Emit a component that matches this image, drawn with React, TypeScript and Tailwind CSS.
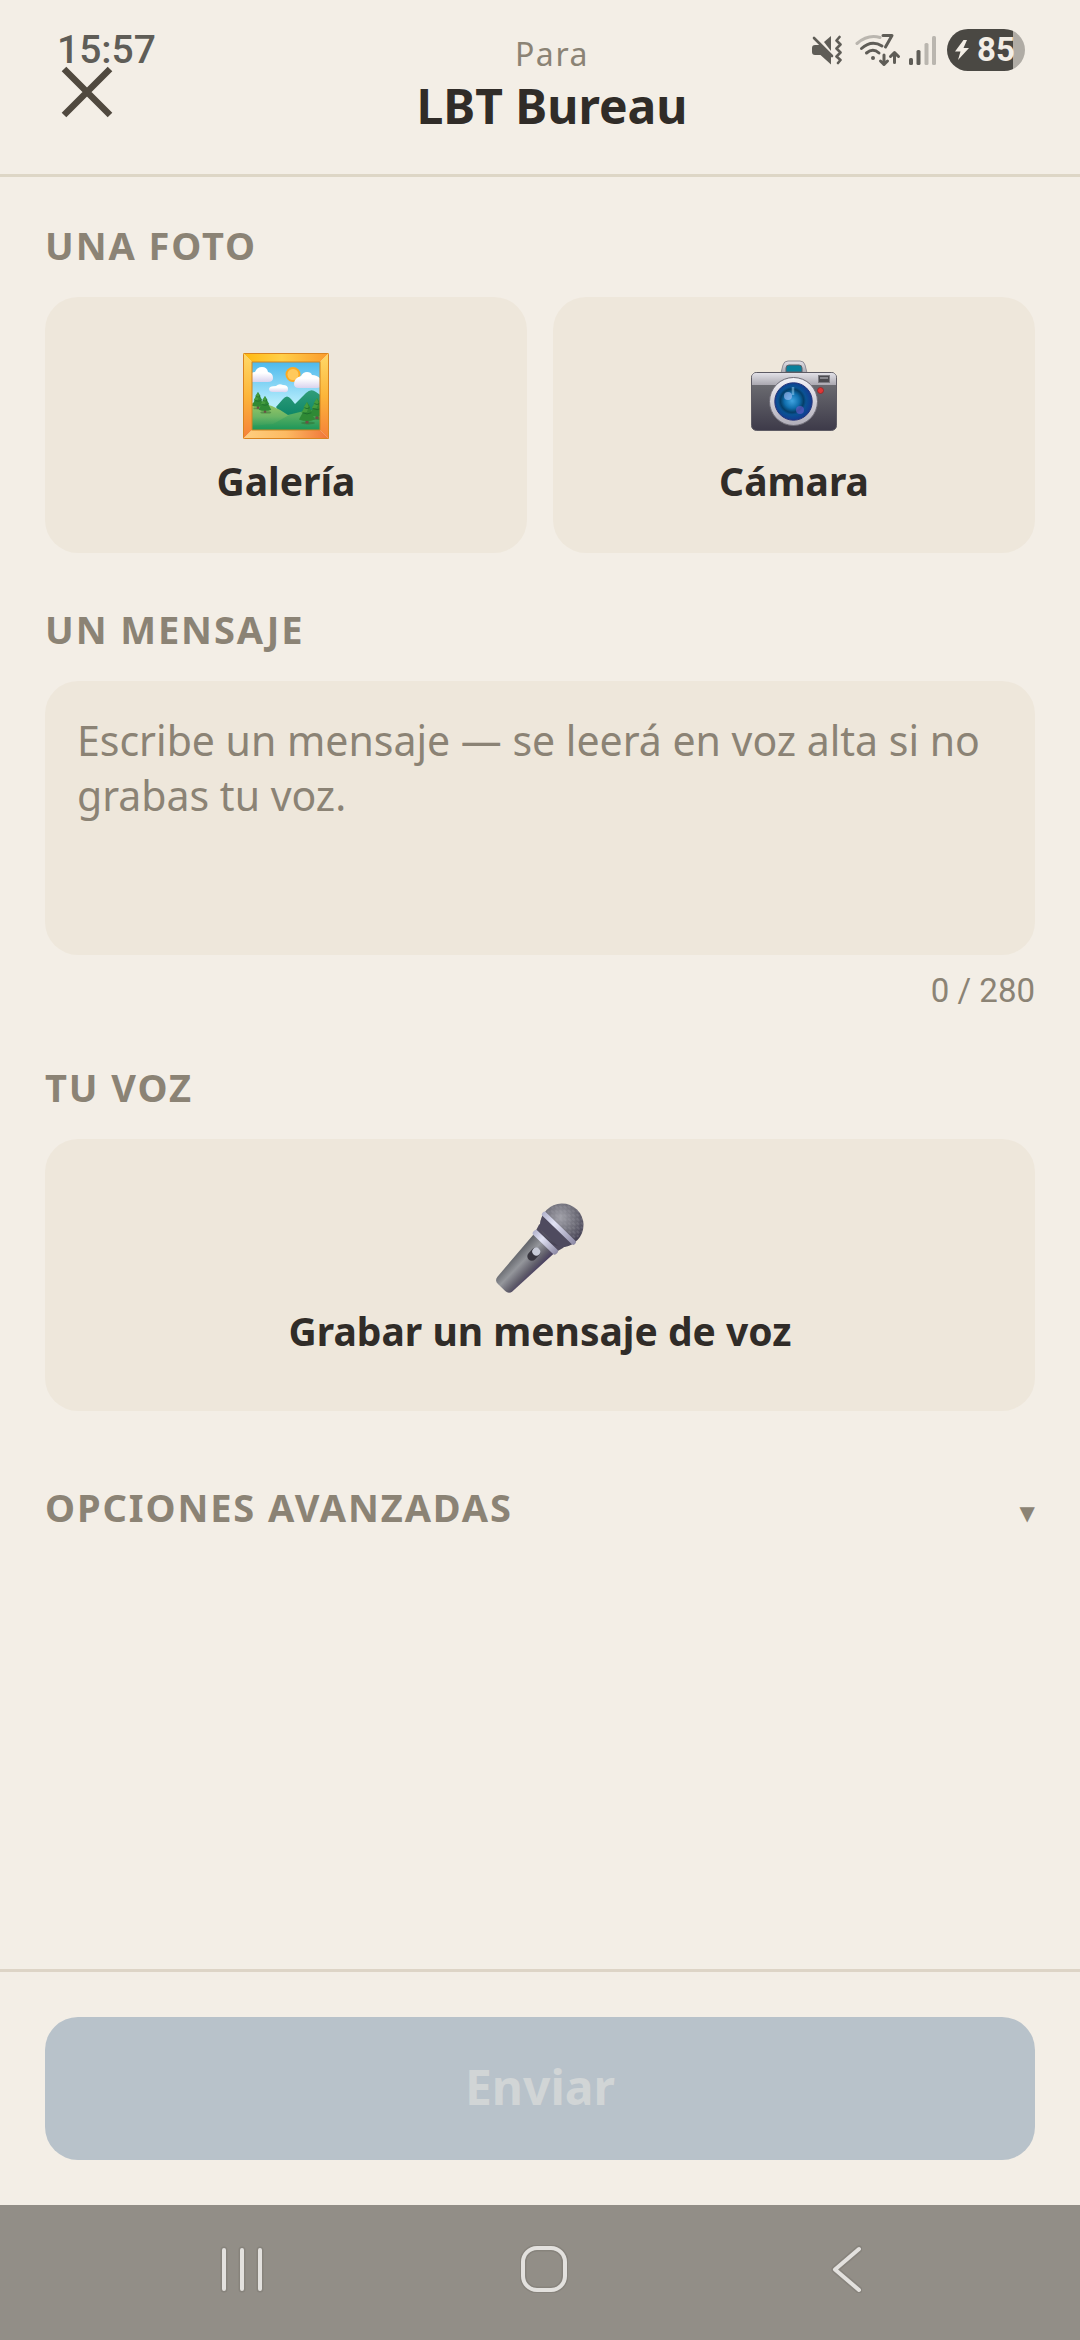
import { useState } from 'react';
import type { ReactNode } from 'react';

function MutedIcon() {
  return (
    <svg className="h-[30px] w-[31px]" viewBox="0 0 31 30" fill="none" aria-hidden="true">
      <path d="M4 10h5L20 21v8.500L9.500 20H4q-3 0-3-3v-4q0-3 3-3z" fill="#5f5d57" />
      <path d="M13 7l7-6v15z" fill="#5f5d57" />
      <path d="M3 3l18 18" stroke="#5f5d57" strokeWidth="2.600" strokeLinecap="round" />
      <path d="M28.500 2l-3 3.500 4 4-4 4 4 4-4 4 4 3.500-2.500 3" stroke="#5f5d57" strokeWidth="2.600" strokeLinecap="round" strokeLinejoin="round" />
    </svg>
  );
}

function WifiIcon() {
  return (
    <svg className="h-[34px] w-[46px]" viewBox="0 0 46 34" fill="none" strokeLinecap="round" aria-hidden="true">
      <path d="M2 10.500Q13 1 25 4.500" stroke="#bab6af" strokeWidth="3" />
      <path d="M6.500 15.500Q16.500 6.500 27 13" stroke="#5f5d57" strokeWidth="3" />
      <path d="M11.500 20Q18 14.500 24 20" stroke="#5f5d57" strokeWidth="3" />
      <circle cx="18" cy="25" r="2" fill="#5f5d57" />
      <path d="M28 2.500h9L30.500 14" stroke="#5f5d57" strokeWidth="3" strokeLinejoin="round" />
      <path d="M29 22v9.500m-3.500-3.500l3.500 3.500 3.500-3.500M39.500 29.500V20M35.500 23.500l4-4 4 4" stroke="#5f5d57" strokeWidth="3" strokeLinejoin="round" />
    </svg>
  );
}

function SignalIcon() {
  return (
    <svg className="h-[31px] w-[28px]" viewBox="0 0 28 31" aria-hidden="true">
      <rect x="0" y="23" width="4" height="7" rx="1.500" fill="#5f5d57" />
      <rect x="7.500" y="15" width="4" height="15" rx="1.500" fill="#5f5d57" />
      <rect x="15.500" y="8" width="4" height="22" rx="1.500" fill="#bab6af" />
      <rect x="23" y="1" width="4" height="29" rx="1.500" fill="#bab6af" />
    </svg>
  );
}

function StatusBar() {
  return (
    <div className="pointer-events-none absolute inset-x-0 top-0 flex h-[100px] items-center justify-between pr-[55px] pl-[57px] font-[Roboto,sans-serif]">
      <span className="text-[39px] leading-10 font-medium text-[#5f5d57]">15:57</span>
      <div className="flex items-center">
        <MutedIcon />
        <span className="ml-[13px] flex"><WifiIcon /></span>
        <span className="ml-2 flex"><SignalIcon /></span>
        <div className="ml-[10px] flex h-[42px] w-[78px] items-center gap-2 rounded-full bg-linear-to-r from-[#4a4843] from-85% to-[#b0aca5] to-85% pl-2">
          <svg className="h-5 w-[14px]" viewBox="0 0 14 20" aria-hidden="true">
            <path d="M8.500 0L0 11.500h5.500L3 20l11-12H8.500L12 0z" fill="#f3eee6" />
          </svg>
          <span className="text-[33px] leading-[42px] font-bold text-[#f3eee6]">85</span>
        </div>
      </div>
    </div>
  );
}

function Tree({ x, y, s }: { x: number; y: number; s: number }) {
  return (
    <g transform={`translate(${x} ${y}) scale(${s})`}>
      <ellipse cx="1" cy="21" rx="7" ry="1.500" fill="#2f6b2f" opacity=".5" />
      <rect x="-1.500" y="17" width="3" height="4.500" fill="#6d5145" />
      <path d="M0 0L3.500 5.500H2.600L5.500 10.500H4.300L8 17.500Q0 20.500-8 17.500L-4.300 10.500H-5.500L-2.600 5.500H-3.500z" fill="#2f8a35" />
      <path d="M0 0L1.500 5 0 10-4.300 10.500H-5.500L-2.600 5.500H-3.500z" fill="#4ea544" opacity=".7" />
      <path d="M-4.300 10.800Q0 13 4.300 10.800M-2.600 5.700Q0 7.500 2.600 5.700" stroke="#1c6b2d" strokeWidth=".9" fill="none" />
    </g>
  );
}

function PictureIcon() {
  return (
    <svg className="size-[86px]" viewBox="0 0 86 86" aria-hidden="true">
      <defs>
        <linearGradient id="frameTop"><stop offset="0" stopColor="#ffb90f" /><stop offset=".45" stopColor="#ffcf48" /><stop offset="1" stopColor="#fb9a2c" /></linearGradient>
        <linearGradient id="frameSide" x2="0" y2="1"><stop offset="0" stopColor="#ffd968" /><stop offset=".5" stopColor="#fcb53a" /><stop offset="1" stopColor="#f5803a" /></linearGradient>
        <linearGradient id="frameBase"><stop offset="0" stopColor="#ffcf80" /><stop offset=".5" stopColor="#fdba62" /><stop offset="1" stopColor="#f07438" /></linearGradient>
        <linearGradient id="sky" x2="0" y2="1"><stop offset="0" stopColor="#4db9ec" /><stop offset=".6" stopColor="#b5ecfc" /></linearGradient>
        <linearGradient id="grass" x2="0" y2="1"><stop offset="0" stopColor="#9cc765" /><stop offset=".5" stopColor="#6bb565" /><stop offset="1" stopColor="#139157" /></linearGradient>
        <linearGradient id="peak" x2="0" y2="1"><stop offset="0" stopColor="#319d79" /><stop offset="1" stopColor="#0a8467" /></linearGradient>
        <linearGradient id="cloud" x2="0" y2="1"><stop offset=".4" stopColor="#fff" /><stop offset="1" stopColor="#d9d3ee" /></linearGradient>
        <clipPath id="canvas"><rect x="9" y="9" width="68" height="68" /></clipPath>
      </defs>
      <path d="M0 0H86L77 9H9z" fill="url(#frameTop)" />
      <path d="M0 0L9 9V77L0 86zM86 0L77 9V77L86 86z" fill="url(#frameSide)" />
      <path d="M0 86L9 77H77L86 86z" fill="url(#frameBase)" />
      <g clipPath="url(#canvas)">
        <rect x="9" y="9" width="68" height="68" fill="url(#sky)" />
        <circle cx="50" cy="21.500" r="7.500" fill="#fdaa22" />
        <circle cx="50" cy="21.500" r="5.500" fill="#ffc95c" />
        <path d="M5 27Q5 20 12 19Q14 14 19 14T25 19Q30 20 30 25Q30 29 25 29H8Q5 29 5 27z" fill="url(#cloud)" />
        <path d="M26 36Q26 33 33 33Q36 30 40 32Q45 32 45 36T40 39H30Q26 39 26 36z" fill="url(#cloud)" />
        <path d="M51 31Q51 25 58 23Q60 19 64 19T69 22Q77 22 79 30Q79 35 74 35H56Q51 35 51 31z" fill="url(#cloud)" />
        <path d="M33 54L40 46Q44 41 48 46L52 51L63 40Q68 35 73 39L80 44V65H40z" fill="url(#peak)" />
        <path d="M9 50Q25 48 45 62Q60 58 77 56V78H9z" fill="url(#grass)" />
        <path d="M30 71L48 61Q62 56 77 57V77H9V73z" fill="#239b5c" opacity=".35" />
        <Tree x={15} y={39} s={0.78} />
        <Tree x={22} y={43} s={0.78} />
        <Tree x={74} y={45} s={0.98} />
        <Tree x={64} y={49} s={1} />
      </g>
      <rect x="9" y="9" width="68" height="68" fill="none" stroke="#cf8320" strokeWidth="1" />
      <rect x=".5" y=".5" width="85" height="85" rx="1" fill="none" stroke="#d9841f" strokeWidth="1" />
    </svg>
  );
}

function CameraIcon() {
  return (
    <svg className="size-[86px]" viewBox="0 0 86 86" aria-hidden="true">
      <defs>
        <linearGradient id="plate" x2="0" y2="1"><stop offset="0" stopColor="#e2e1e7" /><stop offset="1" stopColor="#aaa8b0" /></linearGradient>
        <linearGradient id="body" x2="0" y2="1"><stop offset="0" stopColor="#76777a" /><stop offset="1" stopColor="#3d3a49" /></linearGradient>
        <linearGradient id="ring" x2="0" y2="1"><stop offset="0" stopColor="#f3f2f7" /><stop offset="1" stopColor="#b0adb9" /></linearGradient>
        <radialGradient id="lens" cx=".46" cy=".48"><stop offset="0" stopColor="#41a4e0" /><stop offset=".4" stopColor="#106fae" /><stop offset=".62" stopColor="#053e68" /><stop offset=".75" stopColor="#0a5294" /><stop offset="1" stopColor="#113f92" /></radialGradient>
      </defs>
      <path d="M30 20L32 12Q33 8 37 8H49Q53 8 54 12L56 20z" fill="url(#plate)" stroke="#8f8e96" />
      <path d="M35 19V15Q35 12 38 12H48Q51 12 51 15V19z" fill="#087f9b" stroke="#5f6169" />
      <rect x=".5" y="19.500" width="85" height="58" rx="5" fill="url(#body)" stroke="#5d5b64" />
      <path d="M1 32V24Q1 20 5 20H81Q85 20 85 24V32z" fill="url(#plate)" />
      <rect x="67.500" y="22.500" width="11" height="7" fill="#4c4b50" stroke="#7d7c82" />
      <path d="M69 25H77" stroke="#8a898f" strokeWidth="2" />
      <circle cx="69.500" cy="37.500" r="3" fill="#e23535" stroke="#8c2828" strokeWidth=".8" />
      <circle cx="42.500" cy="48.500" r="24" fill="url(#ring)" stroke="#6d6b75" />
      <circle cx="42.500" cy="48.500" r="18.700" fill="url(#lens)" stroke="#27347a" />
      <circle cx="37" cy="43" r="4" fill="#b8c8ff" opacity=".55" />
      <circle cx="49" cy="57" r="4" fill="#6f5bd0" opacity=".6" />
      <path d="M42 34V42" stroke="#9dd4f5" strokeWidth="2.500" opacity=".5" />
    </svg>
  );
}

function MicrophoneIcon() {
  return (
    <svg className="size-[86px] overflow-visible" viewBox="0 0 86 86" aria-hidden="true">
      <defs>
        <linearGradient id="handle"><stop offset="0" stopColor="#5f6167" /><stop offset=".4" stopColor="#94969b" /><stop offset=".75" stopColor="#62606c" /><stop offset="1" stopColor="#463c5e" /></linearGradient>
        <linearGradient id="band"><stop offset="0" stopColor="#b2b3cc" /><stop offset=".35" stopColor="#e2e3f5" /><stop offset="1" stopColor="#8d8aa5" /></linearGradient>
        <radialGradient id="grille" cx=".35" cy=".4" r=".7"><stop offset="0" stopColor="#a1a1a9" /><stop offset=".55" stopColor="#6c6b76" /><stop offset="1" stopColor="#3d394d" /></radialGradient>
        <pattern id="mesh" width="6" height="6" patternUnits="userSpaceOnUse"><path d="M0 3h3.500M3 6h3M3 0h3" stroke="#b5b4bd" strokeWidth="1" /></pattern>
      </defs>
      <g transform="translate(65 22) rotate(44)">
        <path d="M-14 25L14 25L10.500 82Q10 87 5 87H-5Q-10 87-10.500 82z" fill="url(#handle)" />
        <path d="M-17 15L-14 25H14L17 15z" fill="#504b5e" />
        <circle r="21.500" fill="url(#grille)" />
        <path d="M-20 -8A21.500 21.500 0 0 1 20 -8L20 2H-20z" fill="url(#mesh)" opacity=".35" />
        <path d="M-21 5H21A21.500 21.500 0 0 1 13 18H-13A21.500 21.500 0 0 1-21 5z" fill="#4f4b5f" />
        <rect x="-22.500" y="2" width="45" height="5" rx="2" fill="url(#band)" />
        <rect x="-16" y="21" width="32" height="6" rx="2" fill="url(#band)" />
        <rect x="-4.500" y="33" width="9" height="15" rx="4.500" fill="#38363f" />
        <circle cx="0" cy="37" r="4" fill="#c9ccd8" />
      </g>
    </svg>
  );
}

function SectionTitle({ children }: { children: ReactNode }) {
  return <h2 className="text-[38px] leading-12 font-bold tracking-wider text-[#8b8375] uppercase">{children}</h2>;
}

function ActionCard({ icon, label, className }: { icon: ReactNode; label: string; className: string }) {
  return (
    <button type="button" className={`flex w-full flex-col items-center gap-[18px] rounded-[33px] bg-[#eee7db] text-[39px] leading-12 font-bold text-[#302c28] ${className}`}>
      {icon}
      <span>{label}</span>
    </button>
  );
}

function NavBar() {
  return (
    <nav className="flex h-[135px] items-center justify-between bg-[#928e87] px-[218px] pb-2 text-[#e3e1de]">
      <button type="button" aria-label="Recientes" className="flex">
        <svg className="size-12" viewBox="0 0 48 48" fill="none" strokeLinecap="round" aria-hidden="true">
          <path d="M6 5v39M24 5v39M42 5v39" stroke="#87837c" strokeWidth="7" />
          <path d="M6 5v39M24 5v39M42 5v39" stroke="currentColor" strokeWidth="4" />
        </svg>
      </button>
      <button type="button" aria-label="Inicio" className="flex">
        <svg className="size-12" viewBox="0 0 48 48" fill="none" aria-hidden="true">
          <rect x="3" y="3" width="42" height="42" rx="14" stroke="#87837c" strokeWidth="7" />
          <rect x="3" y="3" width="42" height="42" rx="14" stroke="currentColor" strokeWidth="4" />
        </svg>
      </button>
      <button type="button" aria-label="Atrás" className="flex">
        <svg className="h-12 w-10" viewBox="0 0 40 48" fill="none" strokeLinecap="round" strokeLinejoin="round" aria-hidden="true">
          <path d="M37 4L13 24.500 37 45" stroke="#87837c" strokeWidth="7" />
          <path d="M37 4L13 24.500 37 45" stroke="currentColor" strokeWidth="4" />
        </svg>
      </button>
    </nav>
  );
}

const LIMIT = 280;

export default function App() {
  const [message, setMessage] = useState('');

  return (
    <div className="relative flex min-h-screen flex-col bg-[#f3eee6] font-['Noto_Sans',sans-serif] text-[#302c28]">
      <StatusBar />
      <header className="flex items-end border-b-3 border-[#ddd6c6] px-[45px] pt-[34px] pb-9">
        <button type="button" aria-label="Cerrar" className="flex h-23 w-21 items-center justify-center">
          <svg className="size-[52px]" viewBox="0 0 52 52" aria-hidden="true">
            <path d="M3 3l46 46M49 3L3 49" stroke="#50493f" strokeWidth="6.500" />
          </svg>
        </button>
        <div className="flex-1 text-center">
          <p className="text-[32px] leading-10 tracking-wider text-[#8b8375]">Para</p>
          <h1 className="text-5xl leading-16 font-bold">LBT Bureau</h1>
        </div>
        <div className="w-15" />
      </header>

      <main className="flex flex-1 flex-col px-[45px] pt-11">
        <SectionTitle>Una foto</SectionTitle>
        <div className="mt-7 grid grid-cols-2 gap-[26px]">
          <ActionCard icon={<PictureIcon />} label="Galería" className="pt-14 pb-12" />
          <ActionCard icon={<CameraIcon />} label="Cámara" className="pt-14 pb-12" />
        </div>

        <div className="mt-13">
          <SectionTitle><label htmlFor="message">Un mensaje</label></SectionTitle>
        </div>
        <textarea
          id="message"
          value={message}
          maxLength={LIMIT}
          onChange={(event) => setMessage(event.target.value)}
          placeholder="Escribe un mensaje — se leerá en voz alta si no grabas tu voz."
          className="mt-7 block h-[274px] w-full resize-none rounded-[33px] bg-[#eee7db] px-8 py-8 text-[41px] leading-[55px] outline-none placeholder:text-[#8b8375]"
        />
        <p className="mt-4 text-right font-[Roboto,sans-serif] text-[33px] leading-10 text-[#8b8375]">{message.length} / {LIMIT}</p>

        <div className="mt-13">
          <SectionTitle>Tu voz</SectionTitle>
        </div>
        <div className="mt-7">
          <ActionCard icon={<MicrophoneIcon />} label="Grabar un mensaje de voz" className="pt-16 pb-14" />
        </div>

        <button type="button" className="mt-[72px] flex items-end justify-between text-left">
          <SectionTitle>Opciones avanzadas</SectionTitle>
          <span className="font-['DejaVu_Sans',sans-serif] text-[20px] leading-9 text-[#8b8375]">▼</span>
        </button>
      </main>

      <footer className="border-t-3 border-[#ddd4c6] px-[45px] py-[45px]">
        <button type="button" disabled className="h-[143px] w-full rounded-[33px] bg-[#b8c2ca] pb-1 text-5xl font-bold text-[#d1d5d6]">Enviar</button>
      </footer>
      <NavBar />
    </div>
  );
}
